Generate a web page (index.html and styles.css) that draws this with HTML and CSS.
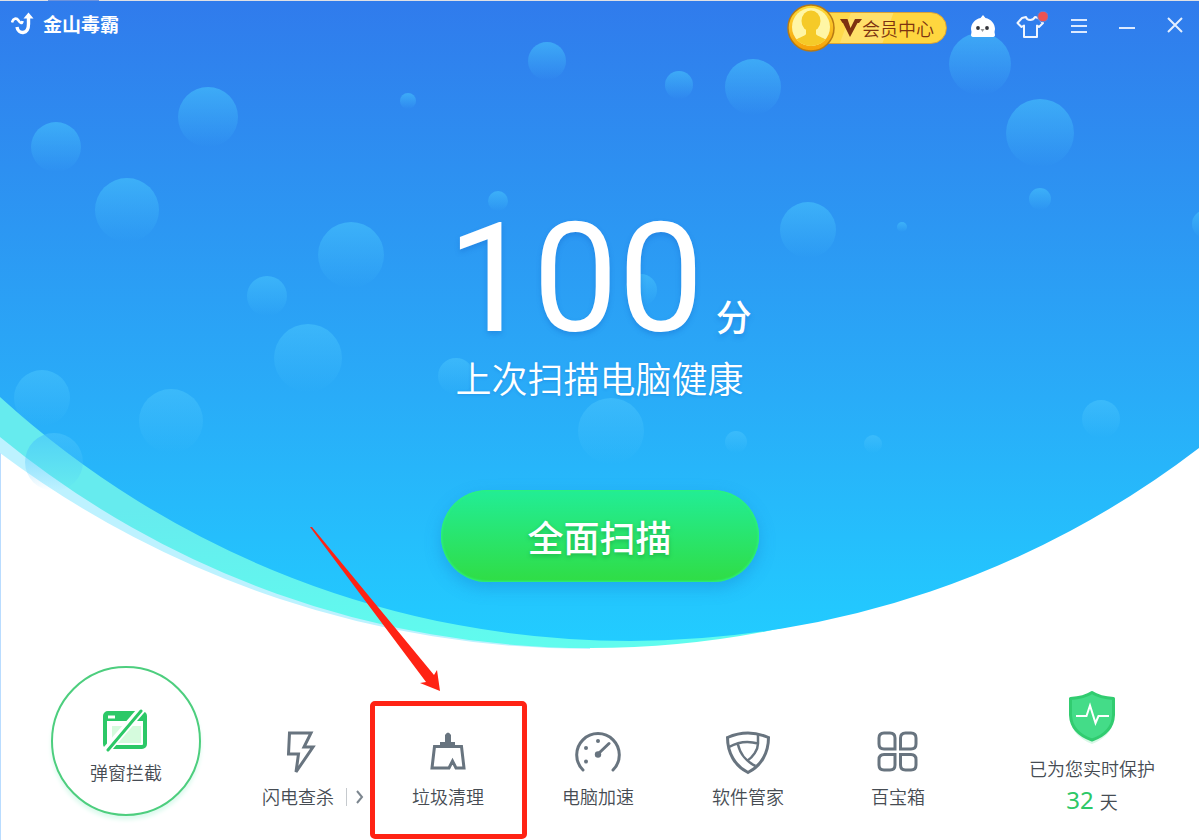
FILE: index.html
```html
<!DOCTYPE html>
<html lang="zh-CN">
<head>
    <meta charset="UTF-8">
    <meta name="viewport" content="width=device-width, initial-scale=1.0">
    <title>金山毒霸</title>
    <link rel="stylesheet" href="styles.css">
</head>
<body>
    <main class="hero">
        <svg class="hero-bg" viewBox="0 0 1199 652" preserveAspectRatio="xMidYMin slice" aria-hidden="true">
            <defs>
                <linearGradient id="sky" gradientUnits="userSpaceOnUse" x1="0" y1="0" x2="0" y2="641">
                    <stop offset="0" stop-color="#307bec"/>
                    <stop offset="0.62" stop-color="#29acf8"/>
                    <stop offset="1" stop-color="#22ccff"/>
                </linearGradient>
                <linearGradient id="teal" x1="0" y1="0" x2="0" y2="1">
                    <stop offset="0.6" stop-color="#66ebee"/>
                    <stop offset="1" stop-color="#60fcee"/>
                </linearGradient>
                <linearGradient id="bubble" x1="0" y1="0" x2="0" y2="1">
                    <stop offset="0" stop-color="#46c2fc" stop-opacity="0.62"/>
                    <stop offset="1" stop-color="#46c2fc" stop-opacity="0"/>
                </linearGradient>
            </defs>
            <path d="M0 453A986 986 0 0 0 590 649V300H0Z" fill="#bdf2ff"/>
            <path d="M0 437A930 930 0 0 0 590 648A930 930 0 0 0 900 595V300H0Z" fill="url(#teal)"/>
            <path d="M0 1V397A935 935 0 0 0 630 641A935 935 0 0 0 1199 448V1Z" fill="url(#sky)"/>
            <path d="M0 0.500H1199" stroke="#dfe0e4"/>
            <path d="M48 0.500H99" stroke="#6d93dc"/>
            <g fill="url(#bubble)">
                <circle cx="547" cy="61" r="19"/>
                <circle cx="408" cy="101" r="8"/>
                <circle cx="208" cy="117" r="30"/>
                <circle cx="56" cy="147" r="25"/>
                <circle cx="127" cy="210" r="32"/>
                <circle cx="351" cy="255" r="33"/>
                <circle cx="267" cy="296" r="20"/>
                <circle cx="308" cy="358" r="34"/>
                <circle cx="42" cy="398" r="28"/>
                <circle cx="171" cy="421" r="32"/>
                <circle cx="54" cy="462" r="29"/>
                <circle cx="498" cy="201" r="10"/>
                <circle cx="679" cy="85" r="14"/>
                <circle cx="753" cy="87" r="28"/>
                <circle cx="808" cy="230" r="28"/>
                <circle cx="902" cy="227" r="5"/>
                <circle cx="980" cy="64" r="31"/>
                <circle cx="1040" cy="133" r="34"/>
                <circle cx="1040" cy="199" r="11"/>
                <circle cx="1206" cy="224" r="14"/>
                <circle cx="1101" cy="419" r="19"/>
                <circle cx="873" cy="444" r="9"/>
                <circle cx="736" cy="442" r="11"/>
                <circle cx="611" cy="431" r="33"/>
                <circle cx="456" cy="376" r="18"/>
                <circle cx="641" cy="290" r="16"/>
            </g>
        </svg>

        <header class="titlebar">
            <div class="brand">
                <svg width="24" height="24" viewBox="0 0 24 24" fill="none" stroke="#fff" aria-hidden="true">
                    <path d="M1 10.500C2 6 5.500 5.500 7.500 8.500S11 12 11.500 9" stroke-width="2.600"/>
                    <path d="M6 15C7 22.500 17.500 23 17.500 12V5" stroke-width="3.400"/>
                    <path d="M12.500 6.500L17.500 0.500L22.500 6.500Z" fill="#fff" stroke="none"/>
                </svg>
                <h1>金山毒霸</h1>
            </div>

            <div class="header-right">
                <button class="member" type="button">
                    <svg class="coin" width="48" height="48" viewBox="0 0 48 48" aria-hidden="true">
                        <defs>
                            <linearGradient id="rim" x1="0" y1="0" x2="0" y2="1">
                                <stop offset="0" stop-color="#ffdc38"/>
                                <stop offset="1" stop-color="#f5a007"/>
                            </linearGradient>
                            <clipPath id="face"><circle cx="24" cy="23" r="19"/></clipPath>
                        </defs>
                        <circle cx="24" cy="24" r="23" fill="url(#rim)" stroke="#b87a13" stroke-width="1.500"/>
                        <circle cx="24" cy="23" r="19" fill="#fff6a5"/>
                        <g clip-path="url(#face)" fill="#f5ca28">
                            <ellipse cx="24" cy="17" rx="9.500" ry="10.500"/>
                            <path d="M19 24H29V30C30 33 39 33 41 39V46H7V39C9 33 18 33 19 30Z"/>
                        </g>
                    </svg>
                    <svg width="22" height="18" viewBox="0 0 22 18" aria-hidden="true">
                        <path d="M0 0H7.500L10.500 9L15 0H22L19 4H17.500L10 18L3 4H2.500Z" fill="#7d3210"/>
                    </svg>
                    <span>会员中心</span>
                </button>

                <button class="icon-btn" type="button" aria-label="助手">
                    <svg width="28" height="28" viewBox="0 0 28 28">
                        <path d="M14 1L16.500 4C22 5 26 10 26 15L25.500 18L26 21C26 22.500 25 23 23 23H5C3 23 2 22.500 2 21L2.500 18L2 15C2 10 6 5 11.500 4Z" fill="#fff"/>
                        <circle cx="9" cy="14" r="1.900" fill="#33343a"/>
                        <circle cx="18" cy="14" r="1.900" fill="#33343a"/>
                        <path d="M11.500 15H15.500L13.500 18Z" fill="#999"/>
                    </svg>
                </button>
                <button class="icon-btn" type="button" aria-label="换肤">
                    <svg width="34" height="34" viewBox="0 0 34 34">
                        <path d="M12 6C13 10 19 10 21 6L24 7L29 12L25 16L23 14.500V26H10V14.500L7.500 16L3.500 12L8 7Z" fill="none" stroke="#f0f6ff" stroke-width="2" stroke-linejoin="round"/>
                        <circle cx="29" cy="5.500" r="5.300" fill="#ee5350" stroke="#5584df" stroke-width="1"/>
                    </svg>
                </button>
                <button class="icon-btn" type="button" aria-label="菜单">
                    <svg width="16" height="18" viewBox="0 0 16 18"><path d="M0 1H16M0 7H16M0 13H16" stroke="#dceaff" stroke-width="2"/></svg>
                </button>
                <button class="icon-btn" type="button" aria-label="最小化">
                    <svg width="16" height="16" viewBox="0 0 16 16"><path d="M0 8H16" stroke="#dceaff" stroke-width="2"/></svg>
                </button>
                <button class="icon-btn" type="button" aria-label="关闭">
                    <svg width="18" height="24" viewBox="0 0 18 24"><path d="M2 2L16 16M16 2L2 16" stroke="#e4efff" stroke-width="2"/></svg>
                </button>
            </div>
        </header>

        <section class="score-panel">
            <p class="score"><span class="score-num">100</span><span class="score-unit">分</span></p>
            <p class="score-note">上次扫描电脑健康</p>
            <button class="scan-btn" type="button">全面扫描</button>
        </section>
    </main>

    <footer class="toolbar">
        <button class="popup-btn" type="button">
            <svg width="48" height="44" viewBox="0 0 48 44" aria-hidden="true">
                <rect x="3" y="5" width="40" height="34" rx="3" fill="#fff" stroke="#2cc867" stroke-width="4"/>
                <path d="M3 5H43V13H3Z" fill="#2cc867"/>
                <path d="M6 9H13" stroke="#fff" stroke-width="3"/>
                <path d="M10 18H39V35H10Z" fill="#d5fbdd"/>
                <path d="M41 0L3 44" stroke="#fff" stroke-width="8"/>
                <path d="M39 3L6 42" stroke="#2cc867" stroke-width="3" stroke-linecap="round"/>
            </svg>
            <span>弹窗拦截</span>
        </button>

        <nav class="tools">
            <div class="tool-split">
                <button class="tool" type="button">
                    <svg viewBox="0 0 48 48"><path d="M15.500 5H37L30 19H39L22 44L24.500 26H14.500Z"/></svg>
                    <span>闪电查杀</span>
                </button>
                <button class="more" type="button" aria-label="更多">
                    <svg width="8" height="14" viewBox="0 0 8 14"><path d="M1 1L6 7L1 13" fill="none" stroke="#7c868f" stroke-width="2"/></svg>
                </button>
            </div>
            <div class="tool-marked">
                <button class="tool" type="button">
                    <svg viewBox="0 0 48 48">
                        <path d="M10.500 18.500H37.500L40 40H32L28.500 33L25 40H8Z"/>
                        <path d="M21 14V7Q24 2 27 7V14H31V17H16V14Z" fill="#68747f" stroke="none"/>
                    </svg>
                    <span>垃圾清理</span>
                </button>
                <svg class="arrow" width="132" height="166" viewBox="0 0 132 166" aria-hidden="true">
                    <path d="M1 1L3 1L125 149L128 144L131 165L111 157L117 156Z" fill="#ff2314"/>
                </svg>
            </div>
            <button class="tool" type="button">
                <svg viewBox="0 0 48 48">
                    <path d="M9 42A21.300 21.300 0 1 1 39 42M24 26L35 15.500" stroke-linecap="round"/>
                    <g fill="#68747f" stroke="none">
                        <circle cx="24" cy="26.500" r="3.200"/>
                        <circle cx="24" cy="13" r="2"/>
                        <circle cx="12" cy="20" r="2"/>
                        <circle cx="12" cy="33.500" r="2"/>
                    </g>
                </svg>
                <span>电脑加速</span>
            </button>
            <button class="tool" type="button">
                <svg viewBox="0 0 48 48">
                    <path d="M3.500 9.500Q24 0.500 44.500 9.500C44.500 25 37 38 24 44.500C11 38 3.500 25 3.500 9.500Z"/>
                    <path d="M5 19Q19 11 34 15.500M34 6V15.500C34 22 29 29 23 33M14 16.500C16 26 23 34 31.500 38" stroke-width="2.500"/>
                </svg>
                <span>软件管家</span>
            </button>
            <button class="tool" type="button">
                <svg viewBox="0 0 48 48">
                    <path d="M21 21H10Q5 21 5 16V10Q5 5 10 5H16Q21 5 21 10ZM26.500 21V10Q26.500 5 31.500 5H37Q42 5 42 10V16Q42 21 37 21ZM21 26.500V37Q21 42 16 42H10Q5 42 5 37V31.500Q5 26.500 10 26.500ZM26.500 26.500H37Q42 26.500 42 31.500V37Q42 42 37 42H31.500Q26.500 42 26.500 37Z"/>
                </svg>
                <span>百宝箱</span>
            </button>
        </nav>

        <div class="protect">
            <svg width="48" height="54" viewBox="0 0 48 54" aria-hidden="true">
                <path d="M24 5C30 9 37 10 46 11V28C45 40 37 49 24 54C11 49 3 40 2 28V11C11 10 18 9 24 5Z" fill="#d9f8e7"/>
                <path d="M24 2.500C30 6.500 37 8 45.500 8.500V25C45 37 37 45.500 24 50C11 45.500 3 37 2.500 25V8.500C11 8 18 6.500 24 2.500Z" fill="#44dc88" stroke="#31cc70" stroke-width="3" stroke-linejoin="round"/>
                <path d="M8 26H18.500L22 15.500L27.500 33L30.500 26H41" fill="none" stroke="#fff" stroke-width="2"/>
            </svg>
            <p>已为您实时保护</p>
            <p class="days"><strong>32</strong> 天</p>
        </div>
    </footer>
</body>
</html>
```
FILE: styles.css
```css
* {
    box-sizing: border-box;
}

body {
    margin: 0;
    font-family: "Noto Sans CJK SC", sans-serif;
    font-size: 18px;
    font-weight: 350;
    line-height: 24px;
    color: #464c53;
    background-color: #fff;
    box-shadow: inset 1px 0 #b9dcff;
}

h1, p {
    margin: 0;
}

button {
    margin: 0;
    padding: 0;
    border: none;
    background: none;
    color: inherit;
    font: inherit;
    cursor: pointer;
}

svg {
    display: block;
}

/* Hero */
.hero {
    position: relative;
    padding-bottom: 66px;
    color: #fff;
}

.hero-bg {
    position: absolute;
    top: 0;
    left: 0;
    width: 100%;
    height: 652px;
}

.titlebar {
    position: relative;
    display: flex;
    align-items: center;
    justify-content: space-between;
    padding-top: 4px;
    padding-left: 11px;
}

.brand {
    display: flex;
    align-items: center;
    gap: 8px;
    padding-bottom: 8px;
}

.brand h1 {
    font-size: 19px;
    font-weight: 700;
}

.header-right {
    display: flex;
    align-items: center;
}

.member {
    position: relative;
    isolation: isolate;
    display: flex;
    align-items: center;
    height: 32px;
    margin-right: 12px;
    padding-right: 13px;
    color: #7d3210;
}

.member::before {
    content: "";
    position: absolute;
    z-index: -1;
    inset: 0 0 0 24px;
    border: 1px solid #d9a236;
    border-radius: 0 16px 16px 0;
    background: linear-gradient(110deg, #ffd94a 36px, #ffe06a 37px, #ffe06a 76px, #ffd63f 77px);
}

.member .coin {
    margin-right: 5px;
}

.icon-btn {
    display: flex;
    align-items: center;
    justify-content: center;
    width: 48px;
    height: 48px;
}

/* Score */
.score-panel {
    position: relative;
    display: flex;
    flex-direction: column;
    align-items: center;
    padding-top: 152px;
}

.score {
    display: flex;
    align-items: baseline;
    gap: 12px;
    text-shadow: 0 3px 5px rgba(20, 100, 200, 0.35);
}

.score-num {
    font-family: "Roboto", sans-serif;
    font-size: 152px;
    font-weight: 400;
    line-height: 150px;
}

.score-unit {
    font-size: 36px;
    font-weight: 500;
}

.score-note {
    font-size: 36px;
    line-height: 46px;
    text-shadow: 0 1px 3px rgba(20, 100, 200, 0.3);
}

.scan-btn {
    width: 318px;
    height: 92px;
    margin-top: 90px;
    border-radius: 46px;
    background: linear-gradient(#22ed96, #30dd45);
    box-shadow: inset 0 0 2px 1px #2cf27c, 0 6px 16px rgba(20, 120, 200, 0.35);
    font-size: 36px;
    font-weight: 500;
    text-shadow: 0 2px 4px rgba(10, 120, 50, 0.4);
}

/* Bottom toolbar */
.toolbar {
    position: relative;
    display: flex;
    align-items: flex-start;
    padding: 18px 44px 24px 51px;
}

.popup-btn {
    display: flex;
    flex-direction: column;
    align-items: center;
    gap: 8px;
    width: 150px;
    height: 150px;
    padding-top: 40px;
    border: 2px solid #4dce7e;
    border-radius: 50%;
    background-color: #fff;
    box-shadow: 0 4px 4px #ddfaee;
}

.tools {
    display: flex;
    margin: 62px 0 0 22px;
}

.tool {
    display: flex;
    flex-direction: column;
    align-items: center;
    gap: 8px;
    width: 150px;
}

.tool svg {
    width: 48px;
    height: 48px;
    fill: none;
    stroke: #68747f;
    stroke-width: 3;
}

.tool-split {
    display: grid;
    grid-template-columns: 1fr auto 1fr;
    width: 150px;
}

.tool-split .tool {
    grid-column: 2;
    width: auto;
}

.more {
    align-self: end;
    height: 18px;
    margin: 0 0 2px 12px;
    padding-left: 9px;
    border-left: 1px solid #c6cace;
}

/* Highlighted tool */
.tool-marked {
    position: relative;
}

.tool-marked::after {
    content: "";
    position: absolute;
    top: -27px;
    right: -4px;
    bottom: -31px;
    left: -3px;
    border: 5px solid #ff2314;
    border-radius: 5px;
    pointer-events: none;
}

.arrow {
    position: absolute;
    right: 82px;
    bottom: 116px;
    pointer-events: none;
}

.protect {
    display: flex;
    flex-direction: column;
    align-items: center;
    margin-left: auto;
    padding-top: 24px;
}

.protect p {
    margin-top: 12px;
}

.protect .days {
    margin-top: 8px;
}

.days strong {
    margin-right: 2px;
    font-family: "Noto Sans", sans-serif;
    font-size: 24px;
    font-weight: 400;
    color: #2cc867;
}
```
